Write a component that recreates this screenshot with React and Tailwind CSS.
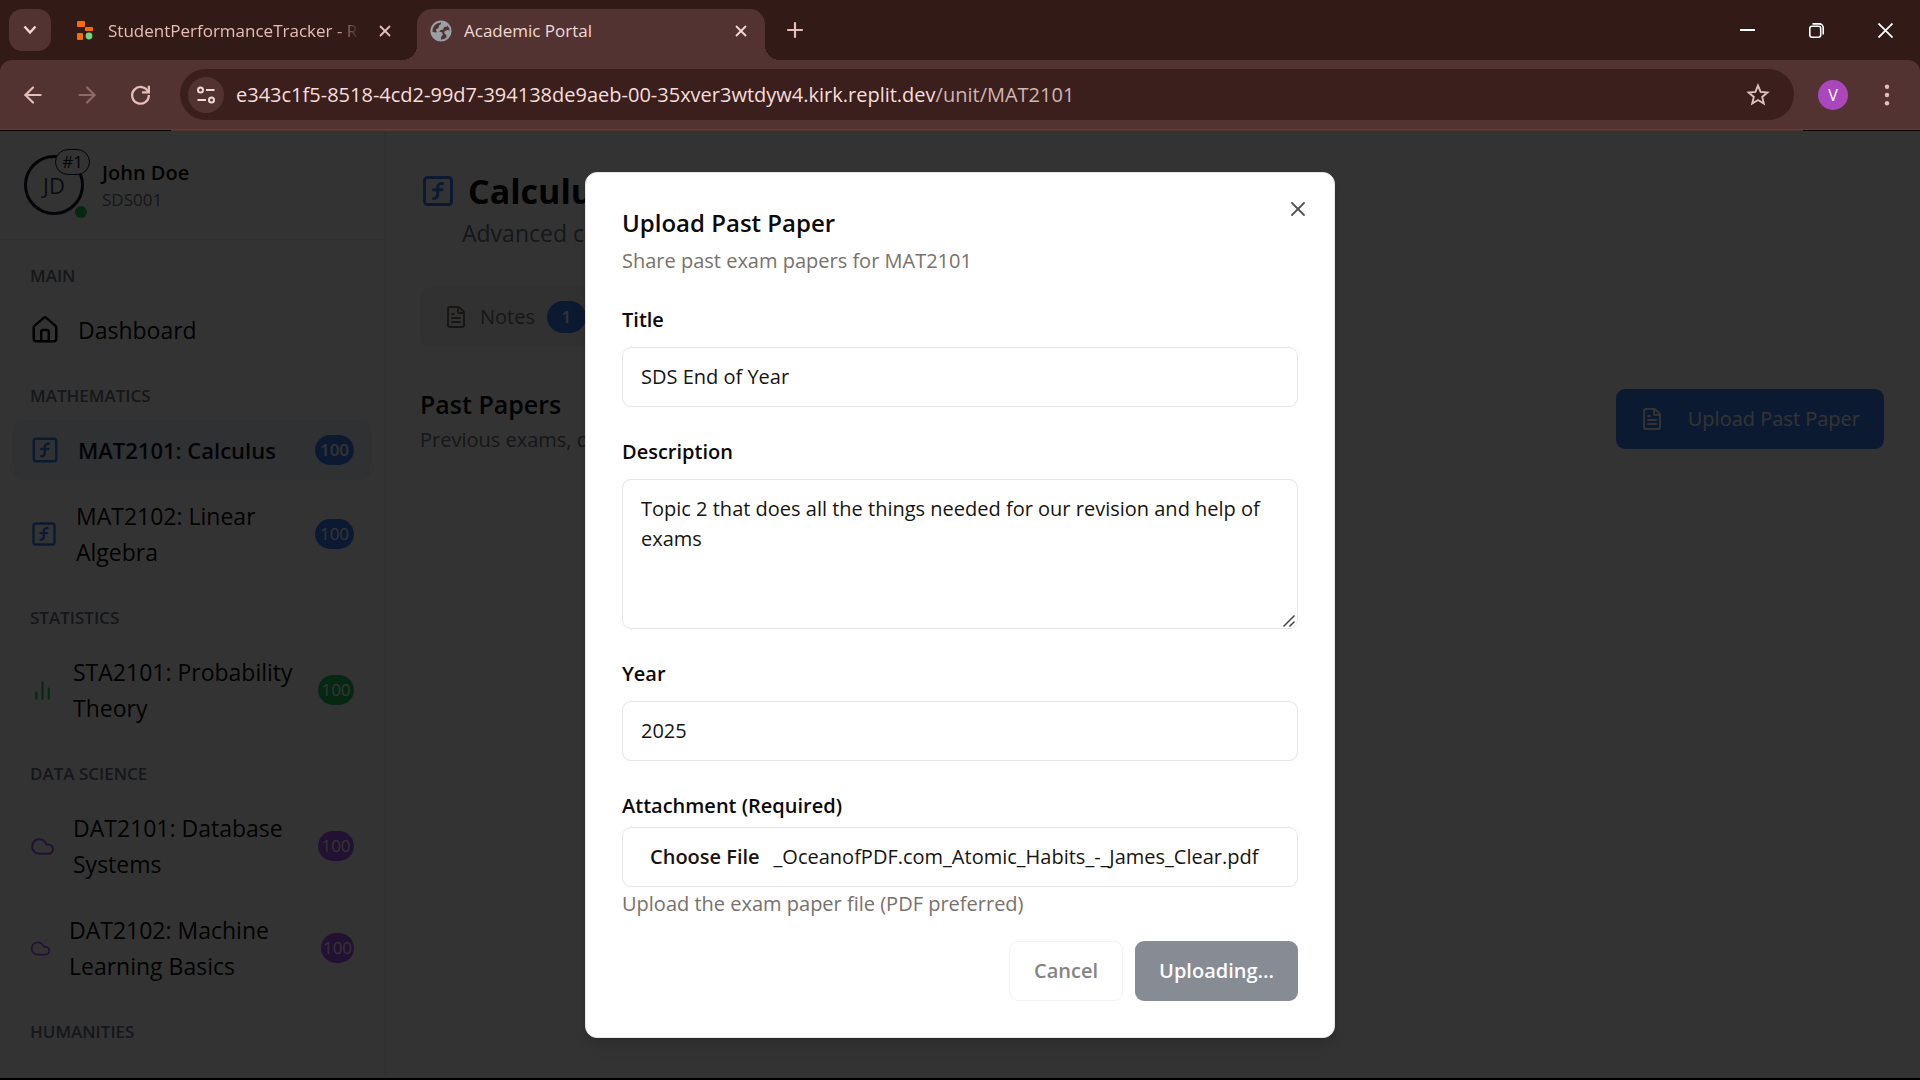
import { useRef } from "react";
import {
  ArrowLeft,
  ArrowRight,
  Cloud,
  FileText,
  House,
  Plus,
  SquareFunction,
  X,
} from "lucide-react";

function BarsIcon({ className }) {
  return (
    <svg viewBox="0 0 24 24" fill="none" stroke="currentColor" strokeWidth="2" strokeLinecap="round" strokeLinejoin="round" className={className} aria-hidden="true">
      <path d="M18 20V10M12 20V4M6 20v-6" />
    </svg>
  );
}

function ReplitIcon() {
  return (
    <svg viewBox="0 0 16 20" className="h-5 w-4 shrink-0" aria-hidden="true">
      <rect x="0" y="0" width="8" height="6" rx="1" fill="#ff6a00" />
      <rect x="8" y="6" width="8" height="4" rx="1" fill="#ff6a00" />
      <rect x="0" y="12" width="6" height="7" rx="1" fill="#ff6a00" />
      <circle cx="12" cy="15" r="3.4" fill="#6cd97e" />
    </svg>
  );
}

function GlobeIcon() {
  return (
    <svg viewBox="0 0 22 22" className="size-[22px] shrink-0" aria-hidden="true">
      <circle cx="11" cy="11" r="9.6" fill="#523331" stroke="#9aa0a6" strokeWidth="2" />
      <path d="M11 1.5c3 0 5.500 1.200 7.200 3.200l-1.500 2.100-2.700.2-.8 2.400-2.600.6-1.400 1.800 2.700.4 1 2.300-1.700 2.200-.3 2.800-2.400 1C4 19.500 1.500 16 1.500 11.600l3.700 1 1.800-.3-1.200-2.700L8.500 8l.5-2.500L11 4z" fill="#9aa0a6" />
      <path d="M14.500 11.200l3-1.200 2.700.8c0 3-1.500 5.500-3.700 7.200l-.2-3.200-2-1.300z" fill="#9aa0a6" />
    </svg>
  );
}

function Tab({ icon, title, active }) {
  return (
    <div
      className={
        active
          ? "relative flex h-[51px] w-[348px] items-center rounded-t-[15px] bg-[#523331] pb-2 pl-[13px] text-[#f0d9d6]"
          : "flex h-[51px] w-[348px] items-center pb-2 pl-[8px] text-[#e7bdb8]"
      }
    >
      {icon}
      <span
        className={
          active
            ? "ml-3 flex-1 overflow-hidden text-[17px] whitespace-nowrap"
            : "ml-[15px] w-[252px] overflow-hidden text-[17px] whitespace-nowrap [mask-image:linear-gradient(to_right,black_90%,transparent)]"
        }
      >
        {title}
      </span>
      <button type="button" aria-label={`Close ${title}`} className={active ? "mr-[15px]" : "ml-[16px]"}>
        <X className="size-[18px]" strokeWidth={2.4} />
      </button>
      {active && (
        <>
          <span className="absolute bottom-0 -left-[15px] size-[15px] bg-[radial-gradient(circle_at_top_left,transparent_15px,#523331_15px)]" />
          <span className="absolute -right-[15px] bottom-0 size-[15px] bg-[radial-gradient(circle_at_top_right,transparent_15px,#523331_15px)]" />
        </>
      )}
    </div>
  );
}

function BrowserChrome() {
  return (
    <header className="shrink-0 bg-[#321a16]">
      <div className="flex items-end">
        <button type="button" aria-label="Search tabs" className="mr-[18px] mb-[9px] ml-[9px] flex size-[42px] items-center justify-center rounded-[13px] bg-[#523331] text-[#f0d9d6]">
          <svg viewBox="0 0 14 10" className="h-[10px] w-[14px]" fill="none" stroke="currentColor" strokeWidth="2.4" aria-hidden="true">
            <path d="M1.500 1.500L7 7.500l5.500-6" />
          </svg>
        </button>
        <Tab icon={<ReplitIcon />} title="StudentPerformanceTracker - Replit" />
        <Tab icon={<GlobeIcon />} title="Academic Portal" active />
        <button type="button" aria-label="New tab" className="mb-[18px] ml-[18px] text-[#e7bdb8]">
          <Plus className="size-6" strokeWidth={2.2} />
        </button>
        <div className="ml-auto flex h-[60px] items-center gap-[54px] pr-[27px] text-white">
          <button type="button" aria-label="Minimize">
            <svg viewBox="0 0 15 15" className="size-[15px]" aria-hidden="true"><path d="M0 7h15" stroke="currentColor" strokeWidth="2" /></svg>
          </button>
          <button type="button" aria-label="Restore">
            <svg viewBox="0 0 15 15" className="size-[15px]" fill="none" stroke="currentColor" strokeWidth="1.600" aria-hidden="true">
              <rect x="0.800" y="3.300" width="10.900" height="10.900" rx="2.200" />
              <path d="M3.500.9h6.800a3.900 3.900 0 0 1 3.900 3.900v6.700" />
            </svg>
          </button>
          <button type="button" aria-label="Close window">
            <svg viewBox="0 0 15 15" className="size-[15px]" fill="none" stroke="currentColor" strokeWidth="1.800" aria-hidden="true"><path d="M.5.5l14 14M14.500.5l-14 14" /></svg>
          </button>
        </div>
      </div>

      <div className="flex h-[70px] items-center rounded-t-[12px] border-b border-[#5f3f3c] bg-[#523331] pl-[20px] text-[#e7bdb8]">
        <button type="button" aria-label="Back"><ArrowLeft className="size-[26px]" strokeWidth={2} /></button>
        <button type="button" aria-label="Forward" className="ml-[28px] text-[#8f6a66]"><ArrowRight className="size-[26px]" strokeWidth={2} /></button>
        <button type="button" aria-label="Reload" className="ml-[28px]">
          <svg viewBox="0 0 24 24" className="size-[25px]" fill="none" stroke="currentColor" strokeWidth="2.200" aria-hidden="true">
            <path d="M19.300 9.500A8 8 0 1 0 20 12.500" />
            <path d="M20 3.500v6.500h-6.500" />
          </svg>
        </button>
        <div className="ml-[27px] flex h-[51px] flex-1 items-center rounded-full bg-[#3b1f1c] pr-[24px] pl-[8px]">
          <button type="button" aria-label="Site information" className="mr-3 flex size-9 shrink-0 items-center justify-center rounded-full bg-[#523331] text-[#f0d9d6]">
            <svg viewBox="0 0 20 20" className="size-5" fill="none" stroke="currentColor" strokeWidth="2" aria-hidden="true">
              <circle cx="4.500" cy="5" r="2.500" />
              <path d="M10 5h8.500M1.500 15H10" />
              <circle cx="15.500" cy="15" r="2.500" />
            </svg>
          </button>
          <p className="flex-1 overflow-hidden text-[20px] whitespace-nowrap text-[#f5dedb]">
            e343c1f5-8518-4cd2-99d7-394138de9aeb-00-35xver3wtdyw4.kirk.replit.dev
            <span className="text-[#d0b5b1]">/unit/MAT2101</span>
          </p>
          <button type="button" aria-label="Bookmark" className="text-[#dfc0bc]">
            <svg viewBox="0 0 24 24" className="size-6" fill="none" stroke="currentColor" strokeWidth="1.900" aria-hidden="true">
              <path d="M12 2.600l2.600 6.300 6.800.6-5.200 4.400 1.600 6.700L12 17l-5.800 3.600 1.600-6.700L2.600 9.500l6.800-.6z" />
            </svg>
          </button>
        </div>
        <button type="button" aria-label="Profile" className="ml-6 flex size-[30px] items-center justify-center rounded-full bg-[#ab47bc] text-[16px] text-white">V</button>
        <button type="button" aria-label="Menu" className="mr-[21px] ml-[27px]">
          <svg viewBox="0 0 24 24" className="size-6" fill="currentColor" aria-hidden="true">
            <circle cx="12" cy="3.800" r="2.200" /><circle cx="12" cy="12" r="2.200" /><circle cx="12" cy="20.200" r="2.200" />
          </svg>
        </button>
      </div>
      <div className="flex h-px bg-black pr-[117px] pl-[171px]"><span className="flex-1 bg-[#523331]" /></div>
    </header>
  );
}

const sections = [
  { title: "MAIN", items: [{ label: "Dashboard", Icon: House, icon: "size-[30px]" }] },
  {
    title: "MATHEMATICS",
    items: [
      { label: "MAT2101: Calculus", Icon: SquareFunction, icon: "size-[30px] text-[#3b82f6]", badge: "w-[39px] bg-[#3b82f6] font-semibold", active: true },
      { label: "MAT2102: Linear Algebra", Icon: SquareFunction, icon: "size-[28px] text-[#3b82f6]", badge: "w-[39px] bg-[#3b82f6]" },
    ],
  },
  { title: "STATISTICS", items: [{ label: "STA2101: Probability Theory", Icon: BarsIcon, icon: "size-[25px] text-[#22c55e]", badge: "w-[36px] bg-[#22c55e]" }] },
  {
    title: "DATA SCIENCE",
    items: [
      { label: "DAT2101: Database Systems", Icon: Cloud, icon: "size-[25px] text-[#a855f7]", badge: "w-[36px] bg-[#a855f7]" },
      { label: "DAT2102: Machine Learning Basics", Icon: Cloud, icon: "size-[21px] text-[#a855f7]", badge: "w-[33px] bg-[#a855f7]" },
    ],
  },
  { title: "HUMANITIES", items: [] },
];

function NavItem({ label, Icon, icon, badge, active }) {
  return (
    <a
      href="#unit"
      className={
        active
          ? "flex items-center rounded-xl bg-[#eff6ff] px-[18px] py-3 text-[22px] leading-9 font-semibold text-[#0f172a]"
          : "flex items-center rounded-xl px-[18px] py-3 text-[23px] leading-9 text-[#0a0a0a]"
      }
    >
      <Icon className={`${icon} shrink-0`} />
      <span className="ml-[18px] flex-1">{label}</span>
      {badge && (
        <span className={`${badge} flex h-[30px] shrink-0 items-center justify-center rounded-full text-[17px] text-white`}>100</span>
      )}
    </a>
  );
}

function Sidebar() {
  return (
    <aside className="w-[387px] shrink-0 border-r-[3px] border-[#f4f4f5]">
      <div className="flex items-center border-b border-[#e5e7eb] px-6 pt-6 pb-6">
        <div className="relative flex size-[60px] items-center justify-center rounded-full border-[3px] border-[#0f172a] text-[22px] text-[#374151]">
          JD
          <span className="absolute -top-[9px] -right-[9px] rounded-full border border-[#0f172a] bg-white px-[6px] text-[17px] leading-6 text-[#0f172a]">#1</span>
          <span className="absolute -right-[6px] -bottom-[6px] size-3 rounded-full bg-[#22c55e]" />
        </div>
        <div className="ml-[18px]">
          <p className="text-[20px] leading-[30px] font-semibold text-[#0a0a0a]">John Doe</p>
          <p className="text-[17px] leading-6 text-[#6b7280]">SDS001</p>
        </div>
      </div>
      <nav className="px-3">
        {sections.map((s) => (
          <section key={s.title}>
            <h3 className="px-[18px] pt-6 pb-3 text-[17px] leading-6 font-semibold text-[#6b7280]">{s.title}</h3>
            <div className="flex flex-col gap-[6px]">
              {s.items.map((it) => (
                <NavItem key={it.label} {...it} />
              ))}
            </div>
          </section>
        ))}
      </nav>
    </aside>
  );
}

function UnitPage() {
  return (
    <main className="flex-1 pt-9 pr-9 pl-[33px]">
      <div className="flex items-center">
        <SquareFunction className="size-9 shrink-0 text-[#3b82f6]" />
        <h1 className="ml-3 text-[34px] leading-[48px] font-bold text-black">Calculus</h1>
      </div>
      <p className="pl-[42px] text-[23px] leading-9 text-[#6b7280]">Advanced calculus</p>
      <div className="mt-9 inline-flex h-[60px] items-center rounded-[9px] bg-[#f5f5f4] px-6">
        <FileText className="size-6 text-[#78716c]" />
        <span className="ml-3 text-[20px] font-medium text-[#78716c]">Notes</span>
        <span className="ml-3 flex h-8 w-[39px] items-center justify-center rounded-full bg-[#3b82f6] text-[17px] font-semibold text-white">1</span>
      </div>
      <div className="mt-9 flex items-center justify-between">
        <div>
          <h2 className="text-[25px] leading-[42px] font-semibold text-black">Past Papers</h2>
          <p className="text-[20px] leading-[30px] text-[#6b7280]">Previous exams, quizzes</p>
        </div>
        <button type="button" className="flex h-[60px] items-center rounded-[9px] bg-[#3b82f6] px-6 text-[20px] font-medium text-white">
          <FileText className="mr-6 size-6" />
          Upload Past Paper
        </button>
      </div>
    </main>
  );
}

const labelStyle = "block text-[20px] leading-[42px] font-semibold text-[#0c0a09]";
const fieldStyle = "block w-full rounded-[9px] border border-[#e5e5e5] bg-white px-[18px] text-[20px] text-[#171412]";

function UploadDialog() {
  const fileRef = useRef(null);
  return (
    <div role="dialog" aria-labelledby="dialog-title" className="relative w-full max-w-[750px] rounded-xl border border-[#e5e5e5] bg-white p-9 shadow-lg">
      <button type="button" aria-label="Close" className="absolute top-6 right-6 text-[#555]">
        <X className="size-6" strokeWidth={1.8} />
      </button>
      <h2 id="dialog-title" className="text-[24px] leading-7 font-semibold text-[#0c0a09]">Upload Past Paper</h2>
      <p className="mt-[10px] text-[20px] leading-7 text-[#78716c]">Share past exam papers for MAT2101</p>
      <form className="mt-6 flex flex-col gap-6" onSubmit={(e) => e.preventDefault()}>
        <div>
          <label htmlFor="title" className={`${labelStyle} mb-[6px]`}>Title</label>
          <input id="title" defaultValue="SDS End of Year" className={`${fieldStyle} h-[60px]`} />
        </div>
        <div>
          <label htmlFor="description" className={`${labelStyle} mb-[6px]`}>Description</label>
          <div className="relative">
            <textarea
              id="description"
              defaultValue="Topic 2 that does all the things needed for our revision and help of exams"
              className={`${fieldStyle} h-[150px] resize-none py-[14px] leading-[30px]`}
            />
            <svg viewBox="0 0 12 12" className="absolute right-[3px] bottom-[2px] size-3" fill="none" stroke="#444" strokeWidth="1.5" aria-hidden="true">
              <path d="M.5 11.500l11-11M6.500 11.500l5-5" />
            </svg>
          </div>
        </div>
        <div>
          <label htmlFor="year" className={`${labelStyle} mb-[6px]`}>Year</label>
          <input id="year" defaultValue="2025" className={`${fieldStyle} h-[60px]`} />
        </div>
        <div>
          <label htmlFor="attachment" className={labelStyle}>Attachment (Required)</label>
          <div className="flex h-[60px] items-center rounded-[9px] border border-[#e5e5e5] px-[27px] text-[20px] text-[#171412]">
            <input ref={fileRef} id="attachment" type="file" className="sr-only" />
            <button type="button" className="font-semibold" onClick={() => fileRef.current.click()}>Choose File</button>
            <span className="ml-[14px] whitespace-nowrap">_OceanofPDF.com_Atomic_Habits_-_James_Clear.pdf</span>
          </div>
          <p className="text-[20px] leading-[34px] text-[#78716c]">Upload the exam paper file (PDF preferred)</p>
          <div className="mt-5 flex justify-end gap-3">
            <button type="button" disabled className="h-[60px] rounded-[9px] border border-[#f2f2f2] px-6 text-[20px] font-semibold text-[#858483]">Cancel</button>
            <button type="submit" disabled className="h-[60px] rounded-[9px] bg-[#878b94] px-6 text-[20px] font-semibold text-[#fcfcfd]">Uploading...</button>
          </div>
        </div>
      </form>
    </div>
  );
}

export default function App() {
  return (
    <div className="flex h-screen flex-col overflow-hidden bg-black font-['Open_Sans','Noto_Sans',sans-serif]">
      <BrowserChrome />
      <div className="relative mb-[2px] flex min-h-0 flex-1 overflow-hidden bg-white">
        <Sidebar />
        <UnitPage />
        <div className="absolute inset-0 flex items-center justify-center bg-black/80">
          <UploadDialog />
        </div>
      </div>
    </div>
  );
}
